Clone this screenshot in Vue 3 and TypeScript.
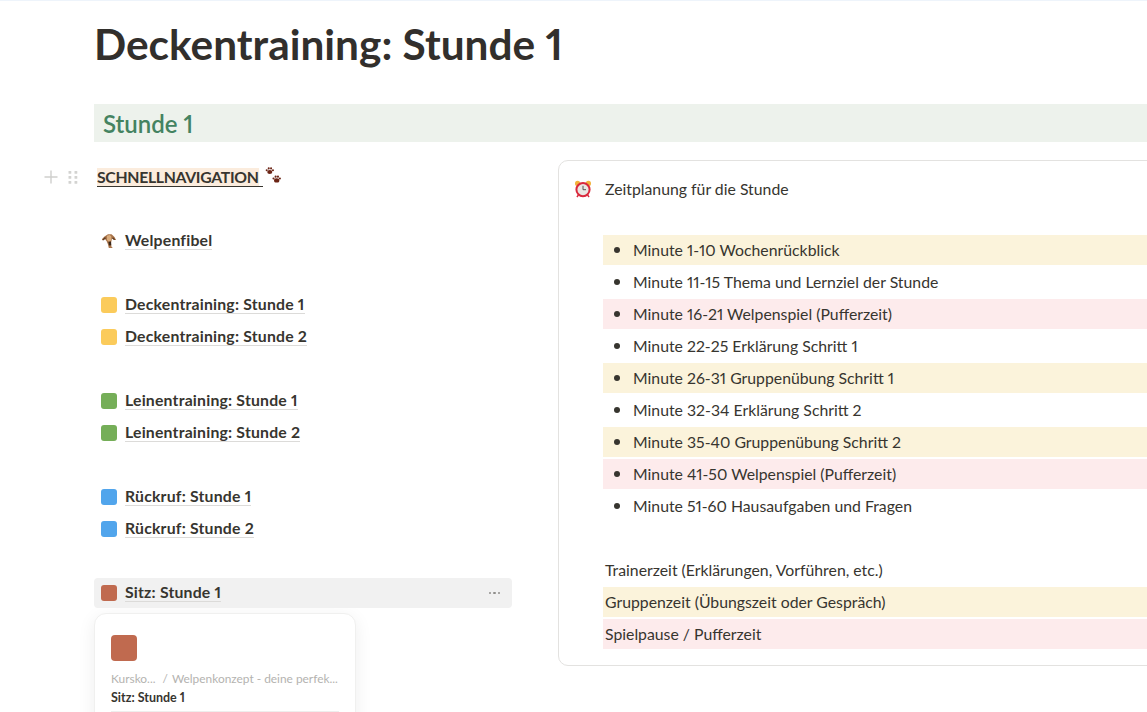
<script setup lang="ts">
const c = { y: '#fbcb5b', g: '#75ae58', b: '#51a5ec', r: '#c06a4f' };
const groups: { color: string; text: string }[][] = [
  [
    { color: c.y, text: 'Deckentraining: Stunde 1' },
    { color: c.y, text: 'Deckentraining: Stunde 2' },
  ],
  [
    { color: c.g, text: 'Leinentraining: Stunde 1' },
    { color: c.g, text: 'Leinentraining: Stunde 2' },
  ],
  [
    { color: c.b, text: 'Rückruf: Stunde 1' },
    { color: c.b, text: 'Rückruf: Stunde 2' },
  ],
];
const plan: { text: string; tone: string }[] = [
  { text: 'Minute 1-10 Wochenrückblick', tone: 'yellow' },
  { text: 'Minute 11-15 Thema und Lernziel der Stunde', tone: '' },
  { text: 'Minute 16-21 Welpenspiel (Pufferzeit)', tone: 'red' },
  { text: 'Minute 22-25 Erklärung Schritt 1', tone: '' },
  { text: 'Minute 26-31 Gruppenübung Schritt 1', tone: 'yellow' },
  { text: 'Minute 32-34 Erklärung Schritt 2', tone: '' },
  { text: 'Minute 35-40 Gruppenübung Schritt 2', tone: 'yellow' },
  { text: 'Minute 41-50 Welpenspiel (Pufferzeit)', tone: 'red' },
  { text: 'Minute 51-60 Hausaufgaben und Fragen', tone: '' },
];
const legend: { text: string; tone: string }[] = [
  { text: 'Trainerzeit (Erklärungen, Vorführen, etc.)', tone: '' },
  { text: 'Gruppenzeit (Übungszeit oder Gespräch)', tone: 'yellow' },
  { text: 'Spielpause / Pufferzeit', tone: 'red' },
];
</script>

<template>
  <div class="page">
    <div class="topline"></div>
    <h1 class="title">Deckentraining: Stunde 1</h1>
    <h2 class="band">Stunde 1</h2>
    <div class="columns">
      <div class="left">
        <div class="row nav">
          <span class="handles">
            <svg width="14" height="14" viewBox="0 0 14 14"><path d="M7 0.5v13M0.5 7h13" stroke="#cfcfcd" stroke-width="1.4" fill="none" /></svg>
            <svg width="10" height="14" viewBox="0 0 10 14" fill="#d3d3d1">
              <rect x="0.5" y="1" width="2.8" height="2.8" rx=".6" /><rect x="6.5" y="1" width="2.8" height="2.8" rx=".6" />
              <rect x="0.5" y="6" width="2.8" height="2.8" rx=".6" /><rect x="6.5" y="6" width="2.8" height="2.8" rx=".6" />
              <rect x="0.5" y="11" width="2.8" height="2.8" rx=".6" /><rect x="6.5" y="11" width="2.8" height="2.8" rx=".6" />
            </svg>
          </span>
          <span class="nav-text"><span class="mark">SCHNELLNAVIGATION</span> </span>
          <svg class="paws" width="17" height="17" viewBox="0 0 16 16" fill="#6b2415">
            <ellipse cx="4.5" cy="4.8" rx="2.4" ry="1.9" />
            <circle cx="1.6" cy="3" r=".95" /><circle cx="3.5" cy="1.3" r=".95" /><circle cx="5.7" cy="1.3" r=".95" /><circle cx="7.5" cy="3" r=".95" />
            <ellipse cx="11" cy="12.6" rx="2.5" ry="2.1" />
            <circle cx="8" cy="10.8" r="1" /><circle cx="10" cy="9.1" r="1" /><circle cx="12.2" cy="9.1" r="1" /><circle cx="14" cy="10.8" r="1" />
          </svg>
        </div>
        <div class="row"></div>
        <div class="row link">
          <svg class="ico" width="18" height="18" viewBox="0 0 18 18">
            <path d="M4.5 4.5 8 2.2h3.5l3 2.8L16 8l-2.4-.6L12 6.5 11 11l.4 3.5 1.4 1.6H8.8L8 12.5l-1.2-3L4.8 6.8 2.2 8.4 2 7z" fill="#a9744a" />
            <path d="M7 3.8 9.6 3l1.6 1.2.2 2.8-1.2 2.6H8.2L7 7.4z" fill="#d9ac7c" />
            <path d="M8.4 9.8l2.6-.2.3 3.6-2.3.2z" fill="#3a2618" />
            <path d="M2.5 7.6 5 5l1 1.2-2.6 2.4zM13 5.2l2.8 2.8-2.2-.2-1.4-1.4z" fill="#5e3b22" />
          </svg>
          <span class="lk">Welpenfibel</span>
        </div>
        <div class="row"></div>
        <template v-for="(g, i) in groups" :key="i">
          <div v-for="item in g" :key="item.text" class="row link">
            <span class="sq" :style="{ background: item.color }"></span>
            <span class="lk">{{ item.text }}</span>
          </div>
          <div class="row"></div>
        </template>
        <div class="row link hover">
          <span class="sq" :style="{ background: c.r }"></span>
          <span class="lk">Sitz: Stunde 1</span>
          <span class="dots"><i></i><i></i><i></i></span>
        </div>
        <div class="preview">
          <span class="bigsq"></span>
          <div class="crumbs"><span>Kursko...</span><span class="sl">/</span><span>Welpenkonzept - deine perfek...</span></div>
          <div class="pv-title">Sitz: Stunde 1</div>
          <div class="pv-rule"></div>
        </div>
      </div>
      <div class="callout">
        <div class="co-head">
          <svg class="clock" width="18" height="18" viewBox="0 0 18 18">
            <circle cx="3.6" cy="3.4" r="2.6" fill="#f2b33d" />
            <circle cx="14.4" cy="3.4" r="2.6" fill="#f2b33d" />
            <path d="M4.5 15l-1.6 2M13.5 15l1.6 2" stroke="#d9283c" stroke-width="1.4" />
            <circle cx="9" cy="9.6" r="6.6" fill="#e9e6e3" stroke="#d9283c" stroke-width="2" />
            <path d="M9 5.8v3.9h3" fill="none" stroke="#555" stroke-width="1" />
          </svg>
          <span class="co-text">Zeitplanung für die Stunde</span>
        </div>
        <div class="co-body">
          <div class="spacer"></div>
          <div v-for="p in plan" :key="p.text" class="co-row" :class="p.tone">
            <span class="bullet"></span><span class="co-text">{{ p.text }}</span>
          </div>
          <div class="spacer second"></div>
          <div v-for="l in legend" :key="l.text" class="co-row plain" :class="l.tone"><span class="co-text">{{ l.text }}</span></div>
        </div>
      </div>
    </div>
  </div>
</template>

<style>
html, body { margin: 0; overflow: hidden; background: #fff; }
</style>

<style scoped>
.page {
  width: 1147px;
  height: 712px;
  overflow: hidden;
  padding-left: 94px;
  box-sizing: border-box;
  position: relative;
  font-family: Lato, "Liberation Sans", sans-serif;
  font-variant-numeric: proportional-nums;
  font-feature-settings: "pnum" 1;
  color: #37352f;
  font-size: 15.8px;
}
.topline { position: absolute; left: 0; right: 0; top: 0; height: 1px; background: #eef4fb; }
.title {
  margin: 0;
  padding-top: 21px;
  height: 104px;
  box-sizing: border-box;
  font-size: 42.4px;
  line-height: 46px;
  font-weight: 700;
  color: #322f2c;
}
.band {
  margin: 0;
  width: 1100px;
  height: 38px;
  line-height: 39px;
  padding-left: 9px;
  box-sizing: border-box;
  background: #edf2ec;
  color: #448361;
  font-size: 24px;
  font-weight: 600;
}
.columns { display: flex; gap: 46px; padding-top: 18px; width: 1100px; }
.left { width: 418px; flex: none; padding-top: 1px; }
.row { height: 32px; display: flex; align-items: center; position: relative; box-sizing: border-box; }
.nav { padding-left: 3px; }
.handles { position: absolute; left: -50px; top: 9px; display: flex; gap: 10px; align-items: center; }
.nav-text { font-weight: 700; border-bottom: 1px solid #37352f; line-height: 18px; padding-right: 4px; letter-spacing: -0.33px; }
.mark { background: #fbecdd; display: inline-block; }
.paws { margin-left: 2px; margin-top: -3px; }
.link { padding-left: 6px; }
.ico { width: 18px; flex: none; margin-right: 7px; }
.sq { width: 16px; height: 16px; border-radius: 3px; margin: 0 8px 0 1px; flex: none; }
.lk { font-weight: 700; border-bottom: 1px solid #dcdbd9; line-height: 18px; margin-bottom: 1px; letter-spacing: 0.2px; }
.hover { background: #f1f1f1; border-radius: 4px; height: 30px; margin: 1px 0; }
.dots { position: absolute; right: 12px; top: 14px; display: flex; gap: 2px; }
.dots i { width: 2.4px; height: 2.4px; border-radius: 50%; background: #8f8e8b; }
.preview {
  width: 262px;
  height: 140px;
  margin-top: 5px;
  box-sizing: border-box;
  border: 1px solid #f0f0ef;
  border-radius: 12px;
  background: #fff;
  box-shadow: 0 4px 18px rgba(0, 0, 0, 0.07);
  padding: 21px 16px 0;
}
.bigsq { display: block; width: 26px; height: 26px; border-radius: 4px; background: #c06a4f; }
.crumbs { display: flex; gap: 4px; margin-top: 10px; font-size: 11.9px; line-height: 15px; color: #b4b3b0; white-space: nowrap; }
.sl { margin: 0 0 0 3px; }
.pv-title { margin-top: 4px; font-size: 12.5px; font-weight: 700; line-height: 15px; color: #37352f; }
.pv-rule { height: 1px; background: #eeeeed; margin-top: 6px; }
.callout {
  flex: 1;
  height: 506px;
  box-sizing: border-box;
  border: 1px solid #e3e2e0;
  border-radius: 10px;
  padding: 12px 0 0 15px;
}
.co-head { display: flex; align-items: center; height: 32px; }
.clock { margin-right: 13px; flex: none; margin-top: -1px; }
.co-body { padding-left: 29px; }
.spacer { height: 30px; }
.spacer.second { height: 32px; }
.co-row { height: 30px; margin-bottom: 2px; display: flex; align-items: center; white-space: nowrap; }
.co-row.plain { padding-left: 2px; }
.co-text { margin-top: -2px; }
.bullet { width: 6px; height: 6px; border-radius: 50%; background: #37352f; margin: 0 13px 0 11px; flex: none; }
.yellow { background: #fbf3db; }
.red { background: #fdebec; }
</style>
